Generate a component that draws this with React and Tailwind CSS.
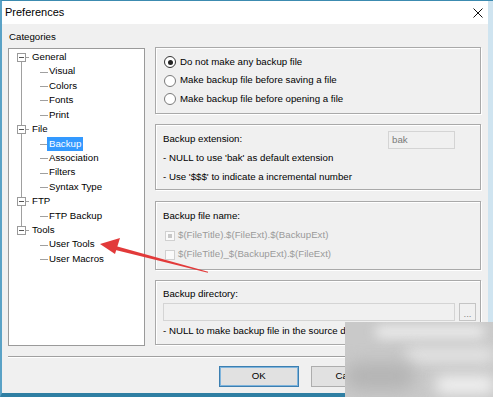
import React from 'react';

const tree = [
  { label: 'General', children: ['Visual', 'Colors', 'Fonts', 'Print'] },
  { label: 'File', children: ['Backup', 'Association', 'Filters', 'Syntax Type'] },
  { label: 'FTP', children: ['FTP Backup'] },
  { label: 'Tools', children: ['User Tools', 'User Macros'] },
];

function Expander() {
  return (
    <span className="absolute left-[8px] top-[3px] w-[9px] h-[9px] border border-[#9a9a9a] bg-white flex items-center justify-center">
      <span className="w-[5px] h-px bg-[#555]" />
    </span>
  );
}

function ParentRow({ label, first, last }) {
  return (
    <div className="relative h-[14.43px]">
      {first && <span className="absolute left-[12px] top-1/2 bottom-0 w-px bg-[#a0a0a0]" />}
      {last && <span className="absolute left-[12px] top-0 h-1/2 w-px bg-[#a0a0a0]" />}
      {!first && !last && <span className="absolute left-[12px] top-0 bottom-0 w-px bg-[#a0a0a0]" />}
      <span className="absolute left-[12px] top-1/2 w-[8px] h-px bg-[#a0a0a0]" />
      <Expander />
      <span className="absolute left-[21px] top-0 h-[14px] px-[2px] leading-[14px] text-black">{label}</span>
    </div>
  );
}

function ChildRow({ label, parentLast, selected }) {
  return (
    <div className="relative h-[14.43px]">
      {!parentLast && <span className="absolute left-[12px] top-0 bottom-0 w-px bg-[#a0a0a0]" />}
      <span className="absolute left-[31px] top-1/2 w-[8px] h-px bg-[#a0a0a0]" />
      <span
        className={
          selected
            ? 'absolute left-[38px] top-0 h-[14px] px-[2px] leading-[14px] bg-[#3399ff] text-white'
            : 'absolute left-[38px] top-0 h-[14px] px-[2px] leading-[14px] text-black'
        }
      >
        {label}
      </span>
    </div>
  );
}

function Group({ className, children }) {
  return (
    <div className={`border border-[#a9a9a9] shadow-[inset_1px_1px_0_#fff,1px_1px_0_#fff] ${className}`}>
      {children}
    </div>
  );
}

function Radio({ checked, label }) {
  return (
    <div className="h-[18.5px] flex items-center gap-[4px]">
      <span
        className={
          checked
            ? 'w-[12px] h-[12px] rounded-full border border-[#333] bg-white flex items-center justify-center'
            : 'w-[12px] h-[12px] rounded-full border border-[#7a7a7a] bg-white flex items-center justify-center'
        }
      >
        {checked && <span className="w-[5px] h-[5px] rounded-full bg-[#222]" />}
      </span>
      <span>{label}</span>
    </div>
  );
}

function Check({ checked, label }) {
  return (
    <div className="h-[19px] flex items-center gap-[3px] text-[#9a9a9a]">
      <span className="w-[10px] h-[10px] border border-[#d0d0d0] bg-[#fafafa] flex items-center justify-center">
        {checked && <span className="w-[4px] h-[4px] bg-[#c8c8c8]" />}
      </span>
      <span>{label}</span>
    </div>
  );
}

export default function App() {
  return (
    <div className="relative w-[493px] h-[397px] bg-[#cfe4f0] border-t border-t-[#3c8bb0] border-l-2 border-l-[#5aa2c6] border-b-4 border-b-[#2f7fa3] font-['Liberation_Sans',Arial,sans-serif] text-[9.7px] text-black">
      <div className="w-[486px] h-full flex flex-col bg-[#f0f0f0]">
        {/* Title bar */}
        <div className="h-[23px] bg-white flex items-center justify-between pl-[3px] pr-[5px]">
          <span className="text-[11px] leading-none">Preferences</span>
          <svg width="10" height="10" viewBox="0 0 10 10">
            <path d="M0.5 0.5 L9.5 9.5 M9.5 0.5 L0.5 9.5" stroke="#111" strokeWidth="1" />
          </svg>
        </div>

        {/* Body */}
        <div className="flex flex-col px-[6px] pt-[7px]">
          <div className="h-[12px] leading-[12px] pl-[1px]">Categories</div>
          <div className="flex gap-[10px] mt-[4px]">
            {/* Tree */}
            <div className="mt-[1px] w-[137px] h-[298px] bg-white border border-[#9a9a9a] pt-[1px]">
              {tree.map((node, i) => (
                <React.Fragment key={node.label}>
                  <ParentRow label={node.label} first={i === 0} last={i === tree.length - 1} />
                  {node.children.map((c) => (
                    <ChildRow key={c} label={c} parentLast={i === tree.length - 1} selected={c === 'Backup'} />
                  ))}
                </React.Fragment>
              ))}
            </div>

            {/* Options */}
            <div className="w-[326px] flex flex-col">
              <Group className="h-[67px] pt-[5px] pl-[8px]">
                <Radio checked label="Do not make any backup file" />
                <Radio label="Make backup file before saving a file" />
                <Radio label="Make backup file before opening a file" />
              </Group>

              <Group className="mt-[10px] h-[66px] pt-[5px] pl-[7px] pr-[25px]">
                <div className="h-[19px] flex items-center justify-between">
                  <span>Backup extension:</span>
                  <span className="w-[67px] h-[18px] border border-[#d4d4d4] bg-[#f0f0f0] text-[#7a7a7a] pl-[3px] leading-[16px]">bak</span>
                </div>
                <div className="h-[19px] flex items-center">- NULL to use 'bak' as default extension</div>
                <div className="h-[19px] flex items-center">- Use '$$$' to indicate a incremental number</div>
              </Group>

              <Group className="mt-[11px] h-[69px] pt-[5px] pl-[9px]">
                <div className="h-[19px] flex items-center -ml-[2px]">Backup file name:</div>
                <Check checked label="$(FileTitle).$(FileExt).$(BackupExt)" />
                <Check label="$(FileTitle)_$(BackupExt).$(FileExt)" />
              </Group>

              <Group className="mt-[10px] h-[65px] pt-[6px] pl-[7px] pr-[4px]">
                <div className="h-[15px] flex items-center">Backup directory:</div>
                <div className="mt-[1px] h-[18px] flex items-center gap-[4px]">
                  <span className="w-[292px] h-[18px] border border-[#d4d4d4] bg-[#f0f0f0]" />
                  <span className="w-[17px] h-[18px] border border-[#c4c4c4] bg-[#f0f0f0] text-[#888] flex items-end justify-center leading-[12px]">...</span>
                </div>
                <div className="h-[20px] flex items-center">- NULL to make backup file in the source directory</div>
              </Group>
            </div>
          </div>

          {/* Separator */}
          <div className="mt-[10px] h-[2px] border-t border-t-[#a0a0a0] border-b border-b-white" />

          {/* Buttons */}
          <div className="mt-[8px] flex gap-[12px] pl-[211px]">
            <button className="w-[80px] h-[21px] border border-[#3c7fb1] bg-[#e1e1e1] shadow-[inset_0_0_0_1px_#7fb4dc]">OK</button>
            <button className="w-[80px] h-[21px] border border-[#adadad] bg-[#e1e1e1]">Cancel</button>
            <button className="w-[80px] h-[21px] border border-[#adadad] bg-[#e1e1e1]">Help</button>
          </div>
        </div>
      </div>

      {/* Blurred watermark over the bottom-right corner */}
      <div className="absolute left-[343px] top-[321px] w-[150px] h-[76px] overflow-hidden bg-[#c9c9c9]">
        <div className="absolute left-[30px] top-[4px] w-[110px] h-[12px] rounded-full bg-[#ededed] blur-[6px]" />
        <div className="absolute left-[60px] top-[26px] w-[90px] h-[14px] rounded-full bg-[#e6e6e6] blur-[7px]" />
        <div className="absolute left-[0px] top-[40px] w-[70px] h-[28px] rounded-full bg-[#b5b5b5] blur-[8px]" />
        <div className="absolute left-[90px] top-[54px] w-[60px] h-[18px] rounded-full bg-[#f0f0f0] blur-[7px]" />
      </div>

      {/* Red arrow */}
      <svg className="absolute -left-[2px] -top-[1px] pointer-events-none" width="493" height="397" viewBox="0 0 493 397">
        <polygon points="116.5,246.3 208.1,271.8 207.9,272.8 115.5,250.1" fill="#e23a3a" />
        <polygon points="100,244 120,238 115,254" fill="#e23a3a" />
      </svg>
    </div>
  );
}
